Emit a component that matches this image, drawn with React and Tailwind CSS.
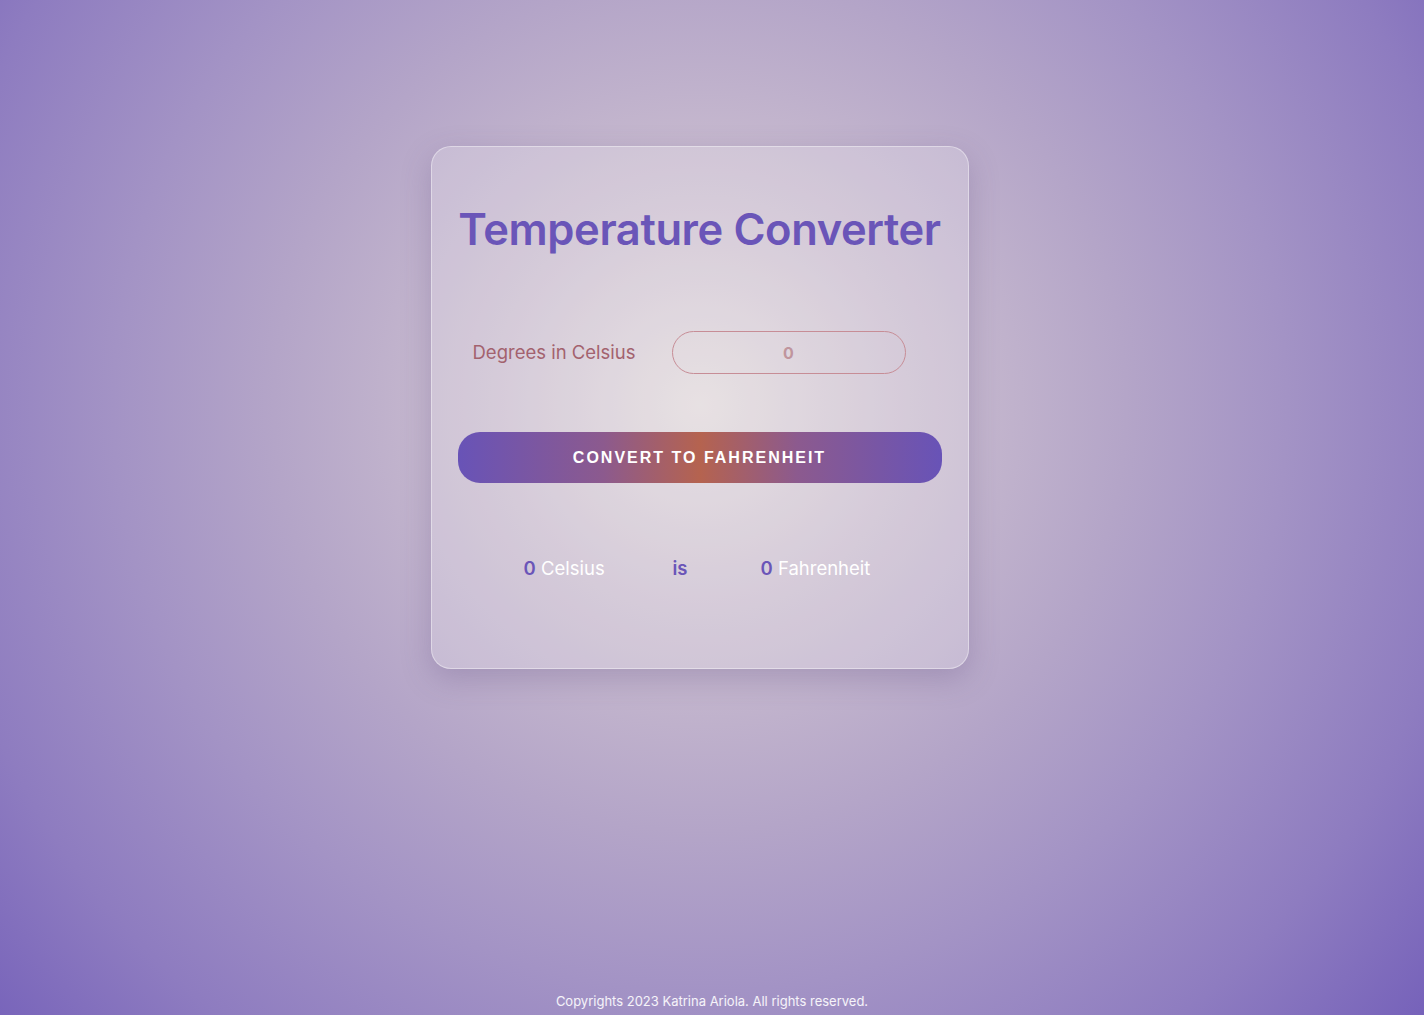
export default function App() {
  return (
    <div
      className="relative w-full h-[1015px] overflow-hidden flex flex-col items-center"
      style={{
        background:
          "radial-gradient(circle farthest-corner at 700px 405px, #e2dadc 0%, #cbbed0 22%, #b4a5c8 45%, #a393c5 62%, #8e7cc0 82%, #7662ba 100%)",
        fontFamily: "Inter, 'Noto Sans', sans-serif",
      }}
    >
      <div className="mt-[146px] mr-[25px] w-[538px] h-[523px] rounded-[20px] border border-white/40 bg-white/20 shadow-[0_10px_30px_rgba(80,60,120,0.25)] px-[26px] flex flex-col items-center">
        <h1 className="mt-[55px] text-[43.5px] leading-[54px] font-semibold text-[#6a55b8] tracking-[-0.4px] whitespace-nowrap">
          Temperature Converter
        </h1>
        <div className="mt-[75px] w-full flex items-center">
          <label className="ml-[15px] w-[199px] text-[18.5px] text-[#a3626e] whitespace-nowrap">
            Degrees in Celsius
          </label>
          <input
            type="text"
            defaultValue="0"
            className="w-[234px] h-[43px] rounded-full border border-[#c78d96] bg-transparent text-center text-[16px] font-bold text-[#c0959d] outline-none"
          />
        </div>
        <button
          className="mt-[58px] w-full h-[51px] rounded-[22px] text-white text-[16px] font-bold tracking-[2px] uppercase"
          style={{
            background: "linear-gradient(90deg, #6853b7 0%, #8c5a8e 30%, #b5634f 50%, #8c5a8e 70%, #6853b7 100%)",
            fontFamily: "'Liberation Sans', Arial, sans-serif",
          }}
        >
          Convert to Fahrenheit
        </button>
        <div className="mt-[71px] w-full flex items-center text-[18.5px] leading-[28px]">
          <span className="ml-[66px] w-[149px] whitespace-nowrap">
            <span className="font-semibold text-[#6a55b8]">0</span>
            <span className="text-white"> Celsius</span>
          </span>
          <span className="w-[88px] font-semibold text-[#6a55b8]">is</span>
          <span className="whitespace-nowrap">
            <span className="font-semibold text-[#6a55b8]">0</span>
            <span className="text-white"> Fahrenheit</span>
          </span>
        </div>
      </div>
      <div className="absolute bottom-[4px] left-0 right-0 text-center text-[13px] text-white/90">
        Copyrights 2023 Katrina Ariola. All rights reserved.
      </div>
    </div>
  );
}
